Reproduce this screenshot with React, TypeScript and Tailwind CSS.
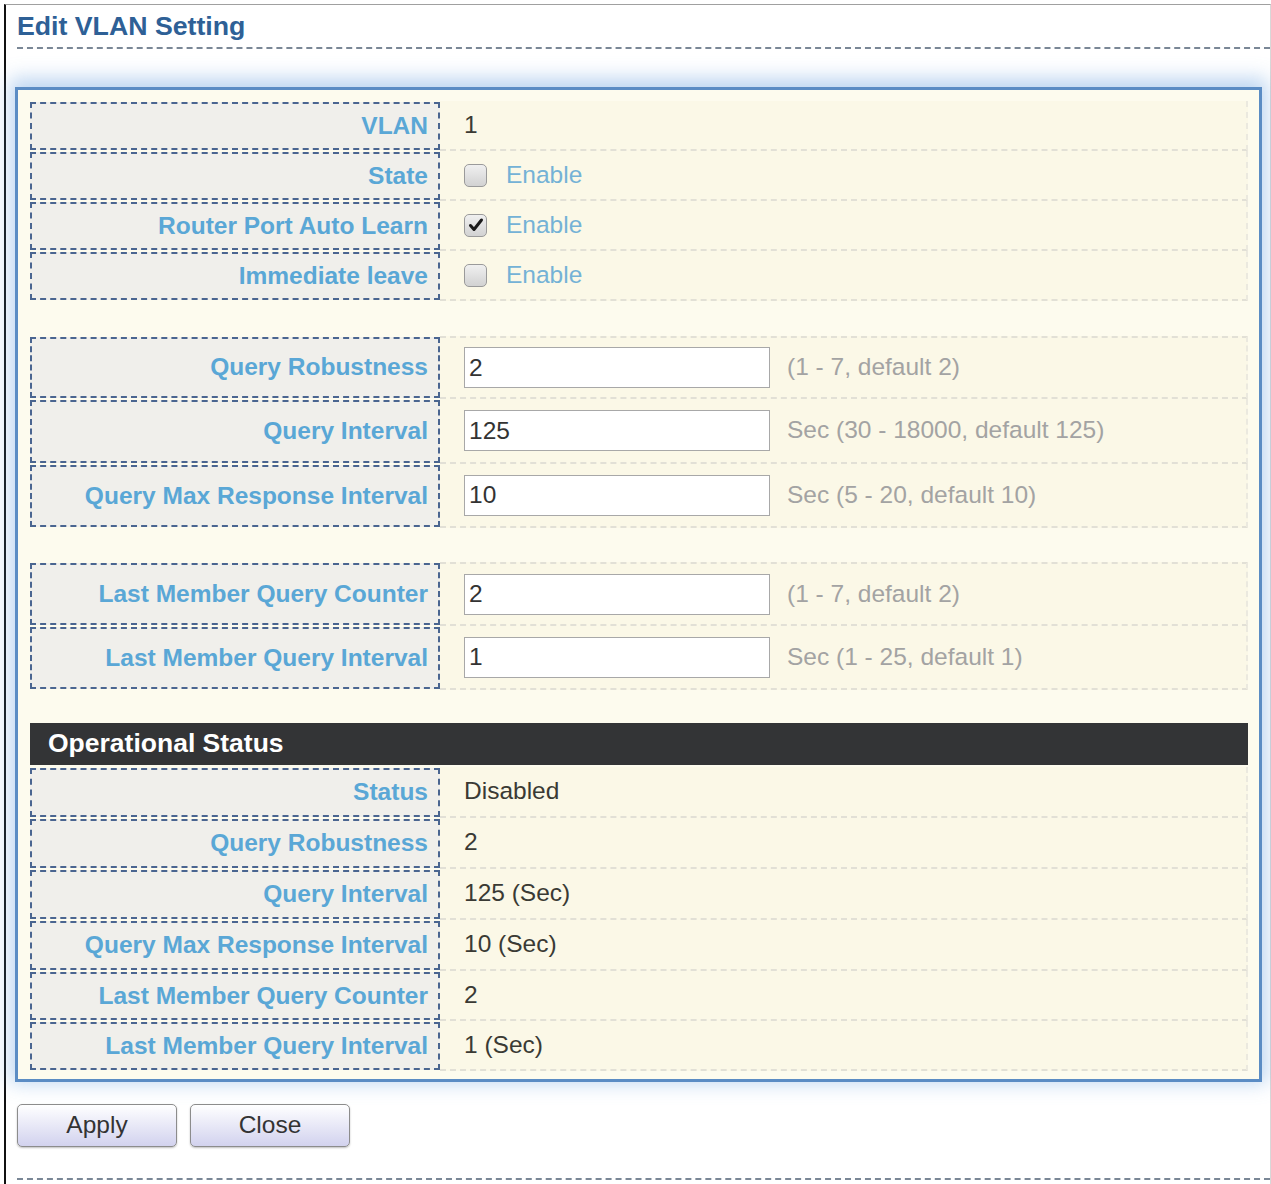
import React from "react";

type RowProps = {
   label: string;
   h: string;
   children?: React.ReactNode;
   first?: boolean;
};

const Row = ({ label, h, children, first }: RowProps) => {
   return (
      <div className={`flex ${h}`}>
         <div className="w-[410px] shrink-0 py-[1px]">
            <div className="h-full border-2 border-dashed border-[#4a6590] bg-[#f0efeb] flex items-center justify-end pr-[10px] text-[24.5px] font-bold text-[#5aa7d6]">
               {label}
            </div>
         </div>
         <div
            className={`flex-1 flex items-center pl-[24px] bg-[#fbf8e7] border-b-2 border-r-2 border-dashed border-b-[#e2e0d6] border-r-[#ebe9df] ${
               first ? "border-t-2 border-t-[#e2e0d6]" : ""
            }`}
         >
            {children}
         </div>
      </div>
   );
};

const CheckBox = ({ checked }: { checked?: boolean }) => (
   <span className="w-[23px] h-[23px] rounded-[5px] border border-[#9a9a9a] bg-linear-to-b from-[#f0f0f0] to-[#d2d2d2] flex items-center justify-center">
      {checked && (
         <svg width="16" height="16" viewBox="0 0 16 16">
            <path
               d="M2.5 8.5 L6 12.5 L13.5 3"
               fill="none"
               stroke="#1a1a1a"
               strokeWidth="3"
               strokeLinecap="round"
               strokeLinejoin="round"
            />
         </svg>
      )}
   </span>
);

const Enable = ({ checked }: { checked?: boolean }) => (
   <div className="flex items-center gap-[19px]">
      <CheckBox checked={checked} />
      <span className="text-[24.5px] text-[#74b2d6]">Enable</span>
   </div>
);

const Field = ({ value, hint }: { value: string; hint: string }) => (
   <div className="flex items-center gap-[17px]">
      <input
         readOnly
         value={value}
         className="w-[306px] h-[41px] border border-[#a8a8a8] bg-white px-[4px] text-[24.5px] text-[#333] outline-none"
      />
      <span className="text-[24.5px] text-[#a3a3a3]">{hint}</span>
   </div>
);

const Val = ({ children }: { children: React.ReactNode }) => (
   <span className="text-[24.5px] text-[#3a3a34]">{children}</span>
);

const App = () => {
   return (
      <div className="w-[1271px] h-[1184px] bg-white overflow-hidden font-['Liberation_Sans',Arial,sans-serif]">
         <div className="ml-[4px] mt-[4px] h-[1180px] border-l-2 border-t border-l-[#111] border-t-[#a0a0a0] border-r border-r-[#d8d8d8]">
            {/* title */}
            <div className="ml-[11px] pt-[6px] pb-[6px] border-b-2 border-dashed border-[#7a8796]">
               <h2 className="text-[26.7px] leading-[30px] font-bold text-[#2e6096]">
                  Edit VLAN Setting
               </h2>
            </div>

            {/* panel */}
            <div className="ml-[9px] mt-[38px] w-[1247px] border-[3px] border-[#5b8cc4] bg-[#fdfbee] pt-[11px] pb-[8px] pl-[12px] pr-[11px] shadow-[0_-4px_18px_5px_rgba(110,165,225,0.45)]">
               <Row label="VLAN" h="h-[50px]">
                  <Val>1</Val>
               </Row>
               <Row label="State" h="h-[50px]">
                  <Enable />
               </Row>
               <Row label="Router Port Auto Learn" h="h-[50px]">
                  <Enable checked />
               </Row>
               <Row label="Immediate leave" h="h-[50px]">
                  <Enable />
               </Row>

               <div className="h-[35px]" />

               <Row label="Query Robustness" h="h-[63px]" first>
                  <Field value="2" hint="(1 - 7, default 2)" />
               </Row>
               <Row label="Query Interval" h="h-[65px]">
                  <Field value="125" hint="Sec (30 - 18000, default 125)" />
               </Row>
               <Row label="Query Max Response Interval" h="h-[64px]">
                  <Field value="10" hint="Sec (5 - 20, default 10)" />
               </Row>

               <div className="h-[34px]" />

               <Row label="Last Member Query Counter" h="h-[64px]" first>
                  <Field value="2" hint="(1 - 7, default 2)" />
               </Row>
               <Row label="Last Member Query Interval" h="h-[64px]">
                  <Field value="1" hint="Sec (1 - 25, default 1)" />
               </Row>

               <div className="h-[33px]" />

               <div className="h-[42px] bg-[#333436] flex items-center pl-[18px] mb-[2px]">
                  <span className="text-[26.5px] font-bold text-white">Operational Status</span>
               </div>

               <Row label="Status" h="h-[51px]">
                  <Val>Disabled</Val>
               </Row>
               <Row label="Query Robustness" h="h-[51px]">
                  <Val>2</Val>
               </Row>
               <Row label="Query Interval" h="h-[51px]">
                  <Val>125 (Sec)</Val>
               </Row>
               <Row label="Query Max Response Interval" h="h-[51px]">
                  <Val>10 (Sec)</Val>
               </Row>
               <Row label="Last Member Query Counter" h="h-[50px]">
                  <Val>2</Val>
               </Row>
               <Row label="Last Member Query Interval" h="h-[50px]">
                  <Val>1 (Sec)</Val>
               </Row>
            </div>

            {/* buttons */}
            <div className="ml-[11px] mt-[22px] flex gap-[13px]">
               <button className="w-[160px] h-[43px] rounded-[5px] border border-[#8c8c8c] bg-linear-to-b from-white to-[#d2d2ee] text-[24.5px] text-[#333] shadow-[0_1px_2px_rgba(0,0,0,0.25)]">
                  Apply
               </button>
               <button className="w-[160px] h-[43px] rounded-[5px] border border-[#8c8c8c] bg-linear-to-b from-white to-[#d2d2ee] text-[24.5px] text-[#333] shadow-[0_1px_2px_rgba(0,0,0,0.25)]">
                  Close
               </button>
            </div>

            <div className="ml-[11px] mt-[31px] border-b-2 border-dashed border-[#7a8796]" />
         </div>
      </div>
   );
};

export default App;
